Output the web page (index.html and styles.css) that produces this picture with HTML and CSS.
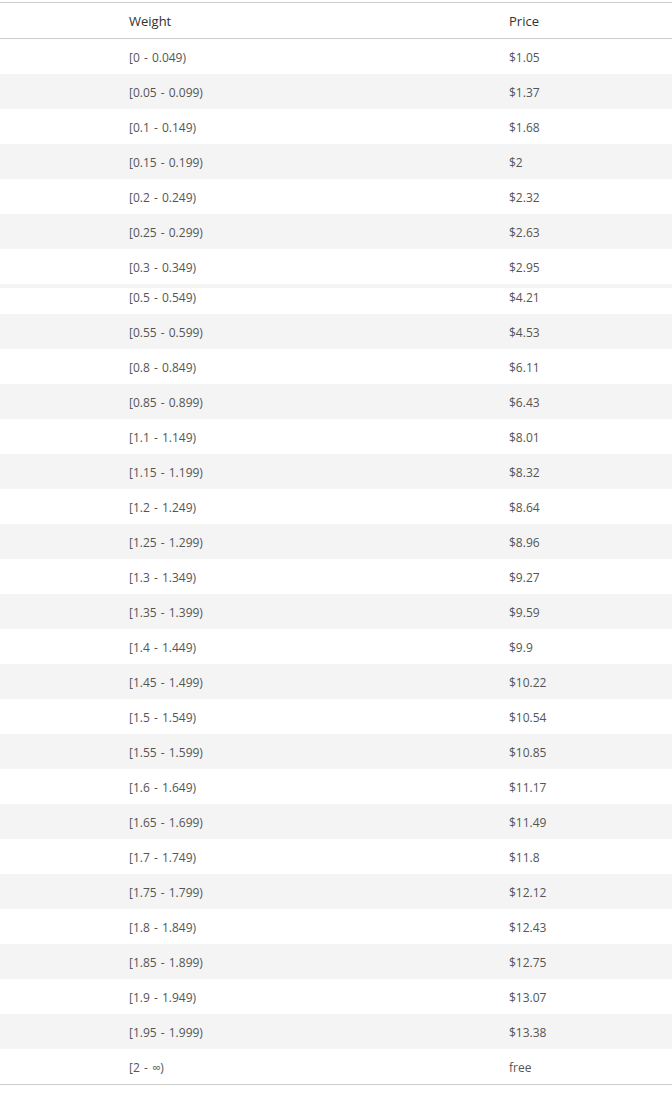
FILE: index.html
```html
<!DOCTYPE html>
<html>
<head>
<meta charset="utf-8">
<link rel="stylesheet" href="styles.css">
</head>
<body>
<div class="page">
  <div class="table">
    <div class="row head"><span class="c1">Weight</span><span class="c2">Price</span></div>
    <div class="row"><span class="c1">[0 - 0.049)</span><span class="c2">$1.05</span></div>
    <div class="row alt"><span class="c1">[0.05 - 0.099)</span><span class="c2">$1.37</span></div>
    <div class="row"><span class="c1">[0.1 - 0.149)</span><span class="c2">$1.68</span></div>
    <div class="row alt"><span class="c1">[0.15 - 0.199)</span><span class="c2">$2</span></div>
    <div class="row"><span class="c1">[0.2 - 0.249)</span><span class="c2">$2.32</span></div>
    <div class="row alt"><span class="c1">[0.25 - 0.299)</span><span class="c2">$2.63</span></div>
    <div class="row"><span class="c1">[0.3 - 0.349)</span><span class="c2">$2.95</span></div>
    <div class="sliver alt"></div>
    <div class="row cut"><span class="c1">[0.5 - 0.549)</span><span class="c2">$4.21</span></div>
    <div class="row alt"><span class="c1">[0.55 - 0.599)</span><span class="c2">$4.53</span></div>
    <div class="row"><span class="c1">[0.8 - 0.849)</span><span class="c2">$6.11</span></div>
    <div class="row alt"><span class="c1">[0.85 - 0.899)</span><span class="c2">$6.43</span></div>
    <div class="row"><span class="c1">[1.1 - 1.149)</span><span class="c2">$8.01</span></div>
    <div class="row alt"><span class="c1">[1.15 - 1.199)</span><span class="c2">$8.32</span></div>
    <div class="row"><span class="c1">[1.2 - 1.249)</span><span class="c2">$8.64</span></div>
    <div class="row alt"><span class="c1">[1.25 - 1.299)</span><span class="c2">$8.96</span></div>
    <div class="row"><span class="c1">[1.3 - 1.349)</span><span class="c2">$9.27</span></div>
    <div class="row alt"><span class="c1">[1.35 - 1.399)</span><span class="c2">$9.59</span></div>
    <div class="row"><span class="c1">[1.4 - 1.449)</span><span class="c2">$9.9</span></div>
    <div class="row alt"><span class="c1">[1.45 - 1.499)</span><span class="c2">$10.22</span></div>
    <div class="row"><span class="c1">[1.5 - 1.549)</span><span class="c2">$10.54</span></div>
    <div class="row alt"><span class="c1">[1.55 - 1.599)</span><span class="c2">$10.85</span></div>
    <div class="row"><span class="c1">[1.6 - 1.649)</span><span class="c2">$11.17</span></div>
    <div class="row alt"><span class="c1">[1.65 - 1.699)</span><span class="c2">$11.49</span></div>
    <div class="row"><span class="c1">[1.7 - 1.749)</span><span class="c2">$11.8</span></div>
    <div class="row alt"><span class="c1">[1.75 - 1.799)</span><span class="c2">$12.12</span></div>
    <div class="row"><span class="c1">[1.8 - 1.849)</span><span class="c2">$12.43</span></div>
    <div class="row alt"><span class="c1">[1.85 - 1.899)</span><span class="c2">$12.75</span></div>
    <div class="row"><span class="c1">[1.9 - 1.949)</span><span class="c2">$13.07</span></div>
    <div class="row alt"><span class="c1">[1.95 - 1.999)</span><span class="c2">$13.38</span></div>
    <div class="row last"><span class="c1">[2 - ∞)</span><span class="c2">free</span></div>
  </div>
</div>
</body>
</html>
```
FILE: styles.css
```css
html, body {
  margin: 0;
  padding: 0;
  background: #fff;
}
.page {
  padding-top: 2px;
  font-family: "Open Sans", "Noto Sans", sans-serif;
}
.table {
  border-top: 1px solid #cccccc;
}
.row {
  display: grid;
  grid-template-columns: 129px 380px 1fr;
  box-sizing: border-box;
  height: 35px;
  padding-top: 2px;
  align-items: center;
  font-size: 12px;
  color: #555555;
  background: #ffffff;
}
.row.alt {
  background: #f4f4f4;
}
.c1 {
  grid-column: 2;
  word-spacing: 1px;
}
.c2 {
  grid-column: 3;
}
.row.head {
  height: 36px;
  padding-top: 0;
  font-size: 13px;
  color: #333333;
  border-bottom: 1px solid #cccccc;
}
.sliver {
  height: 4px;
}
.sliver.alt {
  background: #f4f4f4;
}
.row.cut {
  height: 26px;
  padding-top: 1px;
  align-items: start;
  line-height: 18px;
}
.row.last {
  height: 36px;
  border-bottom: 1px solid #cccccc;
}
```
